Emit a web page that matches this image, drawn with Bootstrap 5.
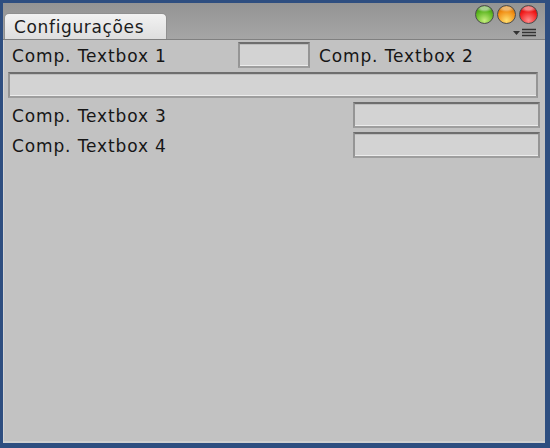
<!DOCTYPE html>
<html><head><meta charset="utf-8">
<link href="https://cdn.jsdelivr.net/npm/bootstrap@5.3.0/dist/css/bootstrap.min.css" rel="stylesheet">
<style>
html,body{height:100%;margin:0}
body{background:#2e4e80;padding:3px 5px 5px 3px;font-family:"DejaVu Sans",sans-serif;font-size:17px;letter-spacing:.87px;color:#161616;overflow:hidden}
.win{height:440px;width:542px;background:#c2c2c2}
.titlebar{height:37px;background:linear-gradient(#949494,#a6a6a6);border-bottom:1px solid #808080;padding-left:1px}
.tabx{width:163px;height:26px;margin-top:10px;background:linear-gradient(#f2f2f2,#dedede);border-radius:5px 5px 0 0;border:1px solid #909090;border-bottom:0;padding-left:9px;line-height:27px;letter-spacing:.65px;color:#1c1c1c}
.ctrls{padding-right:7px;padding-top:2px;gap:3px}
.orb{width:19px;height:19px;border-radius:50%;border:1px solid #4c4c4c}
.g{background:radial-gradient(ellipse 50% 22% at 50% 14%,#a8d090 40%,transparent),radial-gradient(circle at 50% 85%,#c6ee7e,#58b41c 60%,#2a7010)}
.o{background:radial-gradient(ellipse 50% 22% at 50% 14%,#eeb870 40%,transparent),radial-gradient(circle at 50% 85%,#ffe070,#f08a10 60%,#a05a08)}
.r{background:radial-gradient(ellipse 50% 22% at 50% 14%,#f08888 40%,transparent),radial-gradient(circle at 50% 85%,#ff8c8c,#f01818 60%,#a01010)}
.menux{right:8px;top:25px;width:24px;height:10px}
.bodyx{padding:2px 5px 0 5px;height:403px;box-shadow:inset 1px 0 #d4d4d4,inset 0 -2px #d0d0d0}
.rowx{height:26px;margin-bottom:4px;padding-right:2px}
.rowy{height:26px;line-height:28px;margin-bottom:4px;padding-left:4px;white-space:nowrap}
.fld{height:26px;background:#d3d3d3;border:2px solid #959595;border-top-color:#6e6e6e;border-bottom-color:#9e9e9e;box-shadow:inset 0 -1px #ececec,inset 0 1px #bdbdbd}
.w1{width:72px;margin-left:64px;margin-right:9px}
.w2{width:187px}
.lbl{width:162px}
</style></head><body>
<div class="win position-relative">
 <div class="titlebar d-flex justify-content-between align-items-start position-relative">
  <div class="tabx">Configurações</div>
  <div class="ctrls d-flex"><span class="orb g"></span><span class="orb o"></span><span class="orb r"></span></div>
  <svg class="menux position-absolute" viewBox="0 0 24 10"><path d="M0 3h7l-3.500 4z" fill="#333"/><path d="M9 1.500h14M9 4.500h14M9 7.500h14" stroke="#333" stroke-width="1.300"/></svg>
 </div>
 <div class="bodyx">
  <div class="rowy d-flex"><span class="lbl">Comp. Textbox 1</span><div class="fld w1"></div><span>Comp. Textbox 2</span></div>
  <div class="rowx"><div class="fld"></div></div>
  <div class="rowy d-flex justify-content-between"><span>Comp. Textbox 3</span><div class="fld w2"></div></div>
  <div class="rowy d-flex justify-content-between"><span>Comp. Textbox 4</span><div class="fld w2"></div></div>
 </div>
</div>
<script src="https://cdn.jsdelivr.net/npm/bootstrap@5.3.0/dist/js/bootstrap.bundle.min.js"></script>
</body></html>
